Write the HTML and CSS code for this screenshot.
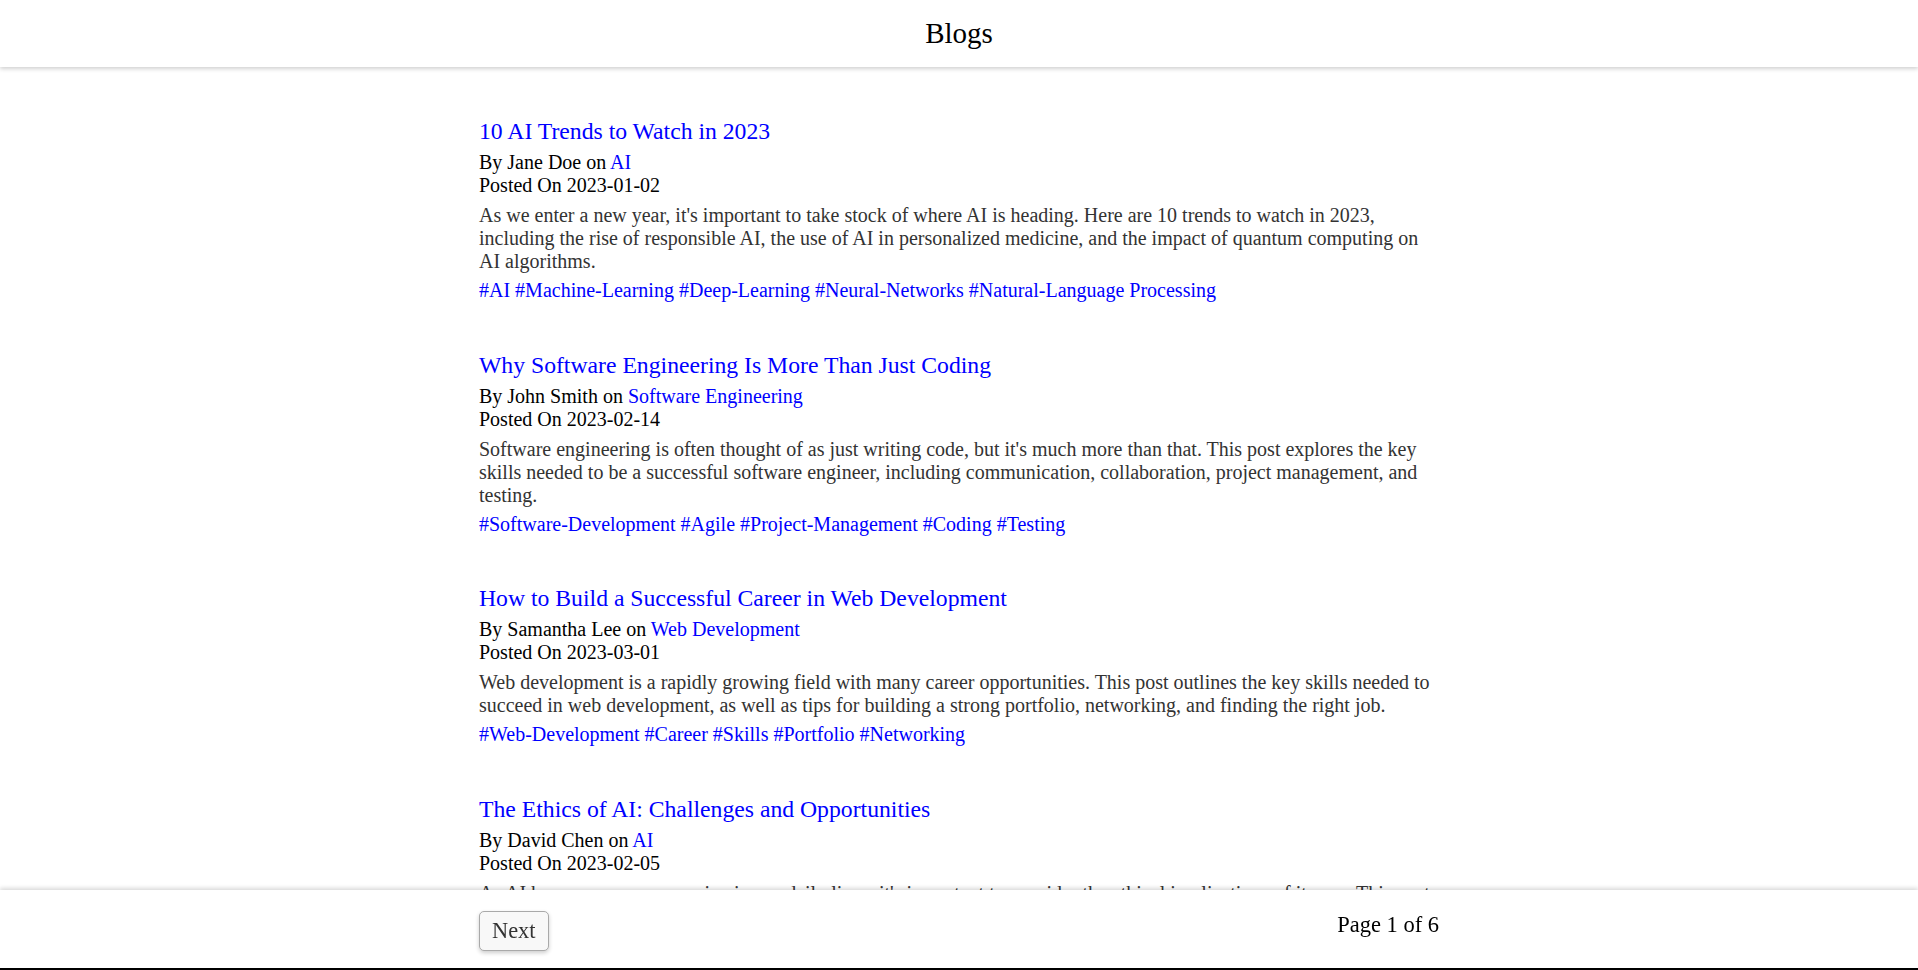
FILE: index.html
```html
<!DOCTYPE html>
<html lang="en">
<head>
<meta charset="utf-8">
<title>Blogs</title>
<link rel="stylesheet" href="styles.css">
</head>
<body>
<header class="site-header">
  <h1 class="site-title">Blogs</h1>
</header>
<main class="posts">
  <article class="post">
    <a class="post-title" href="#">10 AI Trends to Watch in 2023</a>
    <div class="post-meta">
      <div>By Jane Doe on <a href="#" class="link">AI</a></div>
      <div>Posted On 2023-01-02</div>
    </div>
    <p class="post-desc">As we enter a new year, it's important to take stock of where AI is heading. Here are 10 trends to watch in 2023, including the rise of responsible AI, the use of AI in personalized medicine, and the impact of quantum computing on AI algorithms.</p>
    <div class="post-tags"><a href="#" class="link">#AI</a> <a href="#" class="link">#Machine-Learning</a> <a href="#" class="link">#Deep-Learning</a> <a href="#" class="link">#Neural-Networks</a> <a href="#" class="link">#Natural-Language Processing</a></div>
  </article>
  <article class="post">
    <a class="post-title" href="#">Why Software Engineering Is More Than Just Coding</a>
    <div class="post-meta">
      <div>By John Smith on <a href="#" class="link">Software Engineering</a></div>
      <div>Posted On 2023-02-14</div>
    </div>
    <p class="post-desc">Software engineering is often thought of as just writing code, but it's much more than that. This post explores the key skills needed to be a successful software engineer, including communication, collaboration, project management, and testing.</p>
    <div class="post-tags"><a href="#" class="link">#Software-Development</a> <a href="#" class="link">#Agile</a> <a href="#" class="link">#Project-Management</a> <a href="#" class="link">#Coding</a> <a href="#" class="link">#Testing</a></div>
  </article>
  <article class="post">
    <a class="post-title" href="#">How to Build a Successful Career in Web Development</a>
    <div class="post-meta">
      <div>By Samantha Lee on <a href="#" class="link">Web Development</a></div>
      <div>Posted On 2023-03-01</div>
    </div>
    <p class="post-desc">Web development is a rapidly growing field with many career opportunities. This post outlines the key skills needed to succeed in web development, as well as tips for building a strong portfolio, networking, and finding the right job.</p>
    <div class="post-tags"><a href="#" class="link">#Web-Development</a> <a href="#" class="link">#Career</a> <a href="#" class="link">#Skills</a> <a href="#" class="link">#Portfolio</a> <a href="#" class="link">#Networking</a></div>
  </article>
  <article class="post">
    <a class="post-title" href="#">The Ethics of AI: Challenges and Opportunities</a>
    <div class="post-meta">
      <div>By David Chen on <a href="#" class="link">AI</a></div>
      <div>Posted On 2023-02-05</div>
    </div>
    <p class="post-desc">As AI becomes more pervasive in our daily lives, it's important to consider the ethical implications of its use. This post explores the challenges and opportunities of building ethical AI systems, including bias, transparency, and accountability.</p>
    <div class="post-tags"><a href="#" class="link">#AI</a> <a href="#" class="link">#Ethics</a> <a href="#" class="link">#Bias</a> <a href="#" class="link">#Transparency</a> <a href="#" class="link">#Accountability</a></div>
  </article>
</main>
<footer class="site-footer">
  <div class="footer-inner">
    <button class="next-btn" type="button">Next</button>
    <span class="page-info">Page 1 of 6</span>
  </div>
</footer>
</body>
</html>
```
FILE: styles.css
```css
html, body {
  margin: 0;
  padding: 0;
  background: #ffffff;
}

body {
  font-family: "Liberation Serif", "Times New Roman", serif;
  color: #000000;
}

.site-header {
  height: 67px;
  display: flex;
  align-items: center;
  justify-content: center;
  background: #ffffff;
  box-shadow: 0 2px 4px rgba(0, 0, 0, 0.18);
  position: relative;
  z-index: 2;
}

.site-title {
  margin: 0;
  font-size: 29px;
  font-weight: normal;
  line-height: 33px;
}

.posts {
  max-width: 960px;
  margin: 0 auto;
  padding: 50px 0 120px;
}

.post {
  margin-bottom: 49.5px;
}

.post-title {
  display: block;
  font-size: 23.7px;
  line-height: 28px;
  color: #0000ff;
  text-decoration: none;
  margin-bottom: 6px;
}

.post-meta {
  font-size: 20px;
  line-height: 23px;
}

.link {
  color: #0000ff;
  text-decoration: none;
}

.post-desc {
  margin: 7px 0 0;
  font-size: 20px;
  line-height: 23px;
  color: #333333;
}

.post-tags {
  margin-top: 6px;
  font-size: 20px;
  line-height: 22px;
}

.site-footer {
  position: fixed;
  left: 0;
  right: 0;
  bottom: 0;
  height: 78px;
  background: #ffffff;
  border-bottom: 2px solid #000000;
  box-shadow: 0 -2px 4px rgba(0, 0, 0, 0.15);
  z-index: 3;
}

.footer-inner {
  max-width: 960px;
  margin: 0 auto;
  padding-top: 21px;
  display: flex;
  justify-content: space-between;
  align-items: flex-start;
}

.next-btn {
  font-family: "Liberation Serif", "Times New Roman", serif;
  font-size: 22.4px;
  line-height: 26px;
  padding: 6px 12px;
  color: #333333;
  background: #f8f8f8;
  border: 1px solid #a9a9a9;
  border-radius: 5px;
  box-shadow: 0 2px 4px rgba(0, 0, 0, 0.2);
  cursor: pointer;
}

.page-info {
  font-size: 22.5px;
  line-height: 26px;
  margin-top: 1px;
}
```
